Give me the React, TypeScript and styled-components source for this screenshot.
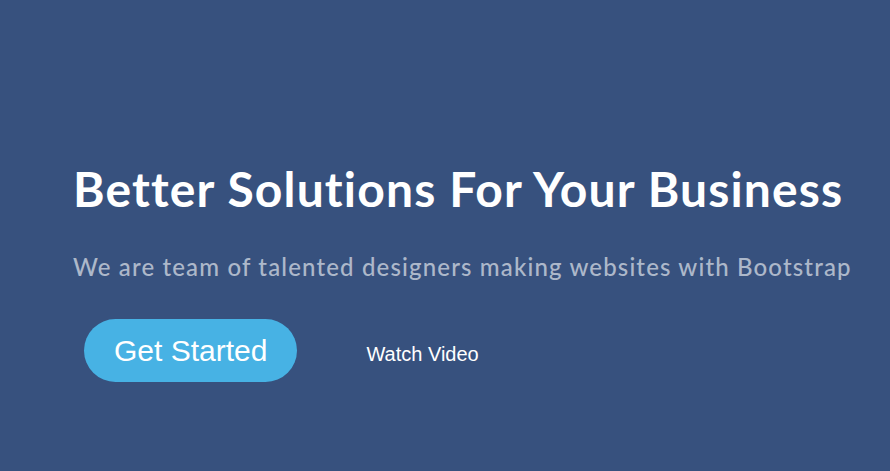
import styled, { createGlobalStyle } from "styled-components";

const GlobalStyle = createGlobalStyle`
  html, body {
    margin: 0;
    padding: 0;
    background: #37517e;
  }
`;

const Hero = styled.section`
  width: 890px;
  height: 471px;
  box-sizing: border-box;
  background: #37517e;
  padding: 161px 0 0 73px;
  overflow: hidden;
  display: flex;
  flex-direction: column;
  align-items: flex-start;
`;

const Title = styled.h1`
  margin: 0 0 34px;
  font-family: "Lato", "Noto Sans", sans-serif;
  font-size: 48px;
  font-weight: 700;
  line-height: 56px;
  letter-spacing: 1.15px;
  font-variant-ligatures: none;
  color: #fff;
  white-space: nowrap;
`;

const Subtitle = styled.h2`
  margin: 0 0 36px;
  font-family: "Lato", "Noto Sans", sans-serif;
  font-size: 24px;
  font-weight: 500;
  line-height: 32px;
  letter-spacing: 1.15px;
  font-variant-ligatures: none;
  color: rgba(255, 255, 255, 0.6);
  white-space: nowrap;
`;

const Actions = styled.div`
  display: flex;
  align-items: center;
  gap: 69px;
  padding-left: 11px;
`;

const StartButton = styled.a`
  display: inline-flex;
  align-items: center;
  justify-content: center;
  height: 63px;
  padding: 0 30px;
  box-sizing: border-box;
  border-radius: 50px;
  background: #47b2e4;
  color: #fff;
  font-family: "Liberation Sans", Arial, sans-serif;
  font-size: 30px;
  text-decoration: none;
`;

const VideoLink = styled.a`
  font-family: "Liberation Sans", Arial, sans-serif;
  font-size: 20px;
  color: #fff;
  text-decoration: none;
  margin-top: 8px;
`;

export default function App() {
  return (
    <>
      <GlobalStyle />
      <Hero>
        <Title>Better Solutions For Your Business</Title>
        <Subtitle>We are team of talented designers making websites with Bootstrap</Subtitle>
        <Actions>
          <StartButton href="#">Get Started</StartButton>
          <VideoLink href="#">Watch Video</VideoLink>
        </Actions>
      </Hero>
    </>
  );
}
